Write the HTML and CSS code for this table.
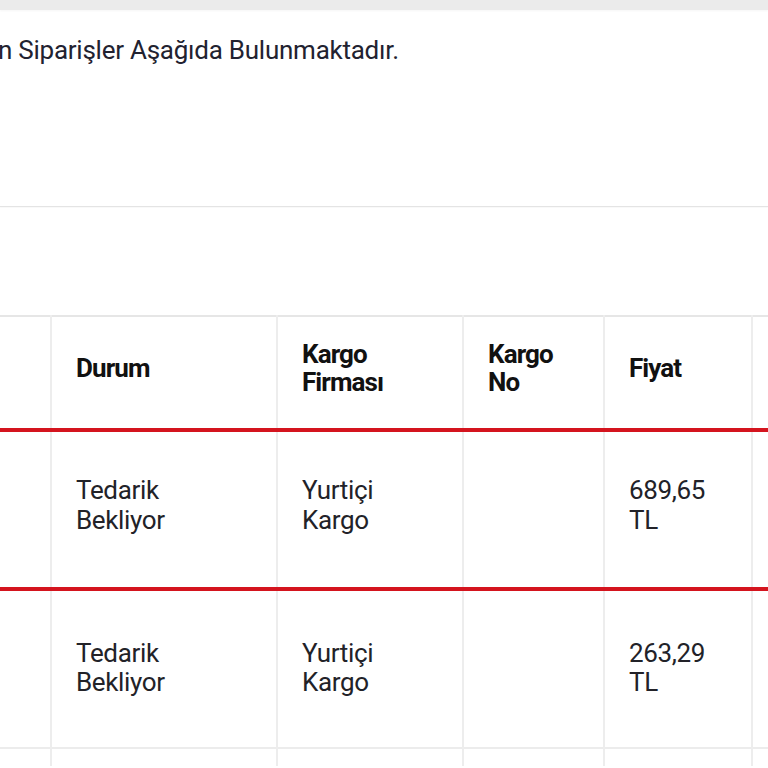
FILE: index.html
```html
<!DOCTYPE html>
<html lang="tr">
<head>
<meta charset="utf-8">
<title>Siparişler</title>
<link rel="stylesheet" href="styles.css">
</head>
<body>
<div class="topbar"></div>
<section class="intro">
  <p class="intro-text">n Siparişler Aşağıda Bulunmaktadır.</p>
</section>
<div class="divider"></div>
<div class="table-wrap">
  <table class="orders">
    <colgroup>
      <col class="c0"><col class="c1"><col class="c2"><col class="c3"><col class="c4"><col class="c5">
    </colgroup>
    <thead>
      <tr class="head-row">
        <th></th>
        <th>Durum</th>
        <th>Kargo<br>Firması</th>
        <th>Kargo<br>No</th>
        <th>Fiyat</th>
        <th></th>
      </tr>
    </thead>
    <tbody>
      <tr class="row row-red">
        <td></td>
        <td>Tedarik<br>Bekliyor</td>
        <td>Yurtiçi<br>Kargo</td>
        <td></td>
        <td>689,65<br>TL</td>
        <td></td>
      </tr>
      <tr class="row row-second">
        <td></td>
        <td>Tedarik<br>Bekliyor</td>
        <td>Yurtiçi<br>Kargo</td>
        <td></td>
        <td>263,29<br>TL</td>
        <td></td>
      </tr>
      <tr class="row-tail">
        <td></td><td></td><td></td><td></td><td></td><td></td>
      </tr>
    </tbody>
  </table>
</div>
</body>
</html>
```
FILE: styles.css
```css
html, body {
  margin: 0;
  padding: 0;
  background: #ffffff;
  overflow: hidden;
}
body {
  font-family: Roboto, "Liberation Sans", sans-serif;
  color: #1e1e24;
  width: 768px;
  height: 768px;
}
.topbar {
  height: 10px;
  background: #ebebeb;
  box-shadow: 0 1px 2px rgba(0,0,0,0.04);
}
.intro {
  height: 196px;
  padding-top: 25px;
  box-sizing: border-box;
}
.intro-text {
  margin: 0 0 0 -2px;
  font-size: 26px;
  line-height: 30px;
  letter-spacing: -0.25px;
  color: #222230;
  white-space: nowrap;
}
.divider {
  height: 1px;
  background: #e4e4e4;
  box-shadow: 0 1px 1px rgba(0,0,0,0.03);
}
.table-wrap {
  padding-top: 108px;
}
.orders {
  border-collapse: collapse;
  table-layout: fixed;
  width: 800px;
  border-top: 2px solid #e6e6e6;
}
.c0 { width: 51px; }
.c1 { width: 226px; }
.c2 { width: 186px; }
.c3 { width: 141px; }
.c4 { width: 148px; }
.c5 { width: 48px; }
.orders th,
.orders td {
  padding: 0 0 0 24px;
  border-left: 2px solid #ededed;
  text-align: left;
  vertical-align: middle;
}
.orders th:first-child,
.orders td:first-child {
  border-left: none;
}
.orders th {
  font-weight: 700;
  font-size: 26px;
  line-height: 28px;
  letter-spacing: -0.9px;
  color: #111111;
  padding-bottom: 9px;
}
.head-row {
  height: 114px;
  border-bottom: 4px solid #d4141e;
}
.orders td {
  font-size: 26px;
  line-height: 29.5px;
  letter-spacing: -0.35px;
  color: #222228;
  padding-bottom: 8px;
}
.row {
  height: 159px;
  border-bottom: 2px solid #ececec;
}
.row-second td {
  padding-bottom: 2px;
}
.row-red {
  border-bottom: 4px solid #d4141e;
}
.row-tail {
  height: 18px;
}
```
